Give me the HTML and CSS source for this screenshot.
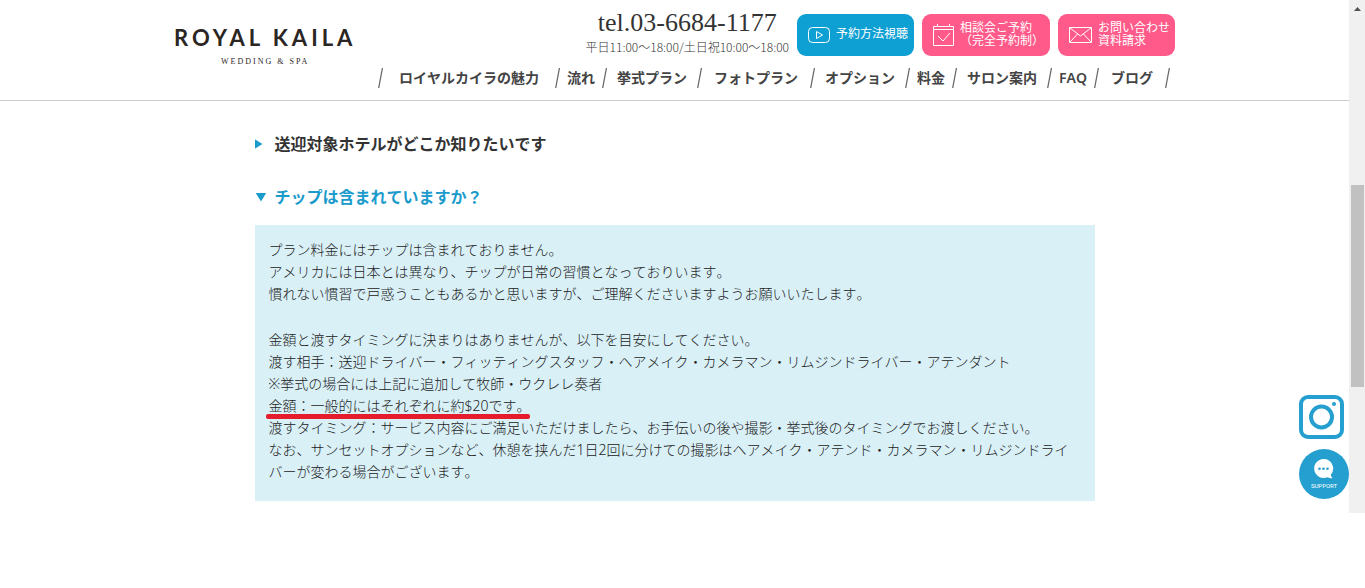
FILE: index.html
```html
<!DOCTYPE html>
<html lang="ja">
<head>
  <meta charset="UTF-8">
  <meta name="viewport" content="width=device-width, initial-scale=1.0">
  <title>よくある質問 | ROYAL KAILA</title>
  <link rel="stylesheet" href="styles.css">
</head>
<body>
  <div class="window">
    <div class="page">
      <header class="header">
        <div class="header-inner">
          <a href="#" class="logo">
            <span class="logo-name">ROYAL KAILA</span>
            <span class="logo-sub">WEDDING &amp; SPA</span>
          </a>
          <div class="header-right">
            <div class="contact">
              <div class="tel">
                <a href="tel:03-6684-1177" class="tel-number">tel.03-6684-1177</a>
                <span class="tel-hours">平日11:00～18:00/土日祝10:00～18:00</span>
              </div>
              <a href="#" class="btn btn-blue">
                <svg width="22" height="16" viewBox="0 0 22 16"><rect x="0.5" y="0.5" width="21" height="15" rx="4"/><path d="M8.500 4.500v7l6-3.500z"/></svg>
                <span>予約方法視聴</span>
              </a>
              <a href="#" class="btn btn-pink btn-wide">
                <svg width="21" height="22" viewBox="0 0 21 22"><path d="M0.500 2.500h20v19h-20zM0.500 5.500h20M4.500 0v3M16.500 0v3M5 12l5 5 7-8"/></svg>
                <span>相談会ご予約<br>（完全予約制）</span>
              </a>
              <a href="#" class="btn btn-pink">
                <svg width="23" height="16" viewBox="0 0 23 16"><path d="M0.500 0.500h22v15h-22zM1 1l10.500 8L22 1M1 15l7.500-8M22 15l-7.500-8"/></svg>
                <span>お問い合わせ<br>資料請求</span>
              </a>
            </div>
            <nav>
              <ul class="nav">
                <li class="wide"><a href="#">ロイヤルカイラの魅力</a></li>
                <li class="narrow"><a href="#">流れ</a></li>
                <li><a href="#">挙式プラン</a></li>
                <li class="middle"><a href="#">フォトプラン</a></li>
                <li><a href="#">オプション</a></li>
                <li class="narrow"><a href="#">料金</a></li>
                <li><a href="#">サロン案内</a></li>
                <li class="narrow"><a href="#">FAQ</a></li>
                <li class="middle"><a href="#">ブログ</a></li>
              </ul>
            </nav>
          </div>
        </div>
      </header>

      <main class="faq">
        <details>
          <summary>送迎対象ホテルがどこか知りたいです</summary>
        </details>
        <details open>
          <summary>チップは含まれていますか？</summary>
          <div class="answer">
            <p>
              プラン料金にはチップは含まれておりません。<br>
              アメリカには日本とは異なり、チップが日常の習慣となっておりいます。<br>
              慣れない慣習で戸惑うこともあるかと思いますが、ご理解くださいますようお願いいたします。
            </p>
            <p>
              金額と渡すタイミングに決まりはありませんが、以下を目安にしてください。<br>
              渡す相手：送迎ドライバー・フィッティングスタッフ・ヘアメイク・カメラマン・リムジンドライバー・アテンダント<br>
              ※挙式の場合には上記に追加して牧師・ウクレレ奏者<br>
              <span class="marked">金額：一般的にはそれぞれに約$20です。</span><br>
              渡すタイミング：サービス内容にご満足いただけましたら、お手伝いの後や撮影・挙式後のタイミングでお渡しください。<br>
              なお、サンセットオプションなど、休憩を挟んだ1日2回に分けての撮影はヘアメイク・アテンド・カメラマン・リムジンドライバーが変わる場合がございます。
            </p>
          </div>
        </details>
      </main>

      <div class="floating">
        <a href="#" class="instagram" aria-label="Instagram">
          <svg width="45" height="44" viewBox="0 0 45 44"><rect x="2" y="2" width="41" height="40" rx="7"/><circle cx="22.500" cy="22" r="10.500"/><circle class="dot" cx="35" cy="9" r="2"/></svg>
        </a>
        <a href="#" class="support">
          <svg width="20" height="20" viewBox="0 0 20 20"><path fill="#fff" d="M9.500 0a9.500 9.500 0 1 0 4 18.200c2 .9 3.500 1.200 5 1-1-1-1.600-2.300-1.600-3.600A9.500 9.500 0 0 0 9.500 0z"/><g fill="#259fcf"><circle cx="5.500" cy="9.800" r="1.300"/><circle cx="9.500" cy="9.800" r="1.300"/><circle cx="13.500" cy="9.800" r="1.300"/></g></svg>
          <span>SUPPORT</span>
        </a>
      </div>
    </div>

    <div class="scrollbar">
      <div class="scroll-arrow"></div>
      <div class="scroll-thumb"></div>
    </div>
  </div>
</body>
</html>
```

FILE: styles.css
```css
* {
  box-sizing: border-box;
}
body {
  margin: 0;
  background: #fff;
  color: #333;
  font-family: "Noto Sans", "Noto Sans CJK JP", sans-serif;
  font-size: 14px;
  font-kerning: none;
}
a {
  color: inherit;
  text-decoration: none;
}
.window {
  display: flex;
}
.page {
  position: relative;
  flex: 1;
  padding-bottom: 12px;
}

/* ---- header ---- */
.header {
  border-bottom: 1px solid #ccc;
}
.header-inner {
  display: flex;
  justify-content: space-between;
  max-width: 1001px;
  margin: 0 auto;
  padding: 8px 0 10px;
}
.logo {
  display: flex;
  flex-direction: column;
  align-items: center;
  padding-top: 16px;
  color: #2b2523;
}
.logo-name {
  font: bold 22px/28px Lato, sans-serif;
  letter-spacing: 4px;
}
.logo-sub {
  padding-top: 4px;
  font: 8px/12px "Liberation Serif", serif;
  letter-spacing: 2px;
}
.header-right {
  display: flex;
  flex-direction: column;
  align-items: flex-end;
}
.contact {
  display: flex;
  gap: 8px;
}
.tel {
  display: flex;
  flex-direction: column;
  align-items: center;
}
.tel-number {
  font: 26px/30px "Liberation Serif", serif;
}
.tel-hours {
  font-family: "Noto Sans CJK JP", sans-serif;
  font-size: 12px;
  font-weight: 300;
  line-height: 18px;
}
.btn {
  display: flex;
  align-items: center;
  gap: 6px;
  width: 117px;
  height: 42px;
  margin-top: 6px;
  padding-left: 11px;
  border-radius: 9px;
  color: #fff;
  font-size: 12px;
  line-height: 13px;
  white-space: nowrap;
}
.btn span {
  padding-bottom: 3px;
}
.btn svg {
  flex: none;
  fill: none;
  stroke: #fff;
}
.btn-blue {
  background: #0e9fd3;
}
.btn-pink {
  background: #ff5a89;
}
.btn-wide {
  width: 128px;
}

/* ---- nav ---- */
.nav {
  display: flex;
  margin: 10px 5px 0 0;
  padding: 0;
  list-style: none;
  color: #444;
  font-weight: 600;
  line-height: 24px;
}
.nav li {
  display: flex;
  align-items: center;
}
.nav a {
  padding: 0 10px;
}
.nav .narrow a {
  padding: 0 7px;
}
.nav .middle a {
  padding: 0 12px;
}
.nav .wide a {
  padding: 0 16px;
}
.nav li::after,
.nav li:first-child::before {
  content: "";
  width: 5px;
  height: 20px;
  background: #666;
  clip-path: polygon(75% 0, 100% 0, 25% 100%, 0 100%);
}

/* ---- faq ---- */
.faq {
  max-width: 840px;
  margin: 0 auto;
  padding-top: 29px;
}
summary {
  display: flex;
  align-items: center;
  gap: 12px;
  margin-bottom: 25px;
  font-size: 16px;
  font-weight: 700;
  line-height: 28px;
  cursor: pointer;
}
summary::before {
  content: "";
  width: 8px;
  height: 10px;
  background: #1a9bcb;
  clip-path: polygon(0 0, 100% 50%, 0 100%);
}
details[open] summary {
  gap: 8px;
  margin-bottom: 14px;
  color: #1a9bcb;
}
details[open] summary::before {
  width: 12px;
  height: 9px;
  clip-path: polygon(8% 0, 100% 0, 54% 100%);
}
.answer {
  padding: 14px 14px 18px;
  background: #d9f0f7;
  color: #222;
}
.answer p {
  margin: 0;
  font-weight: 300;
  line-height: 22px;
}
.answer p + p {
  margin-top: 24px;
}
.marked {
  position: relative;
}
.marked::after {
  content: "";
  position: absolute;
  left: -3px;
  right: 0;
  bottom: -4px;
  height: 5px;
  border-radius: 2px;
  background: #e51c2c;
}

/* ---- floating buttons ---- */
.floating {
  position: absolute;
  right: 0;
  bottom: 14px;
  display: flex;
  flex-direction: column;
  gap: 10px;
}
.instagram svg {
  display: block;
  fill: none;
  stroke: #259fcf;
  stroke-width: 4;
}
.instagram .dot {
  fill: #259fcf;
  stroke: none;
}
.support {
  display: flex;
  flex-direction: column;
  align-items: center;
  gap: 2px;
  width: 50px;
  height: 50px;
  padding-top: 10px;
  border-radius: 50%;
  background: #259fcf;
  color: #fff;
  font: 6px/10px Roboto, sans-serif;
}

/* ---- scrollbar ---- */
.scrollbar {
  width: 16px;
  padding: 7px 1px 0 2px;
  background: #f0f0f0;
}
.scroll-arrow {
  width: 7px;
  height: 4px;
  margin: 0 auto 174px;
  background: #505050;
  clip-path: polygon(50% 0, 100% 100%, 0 100%);
}
.scroll-thumb {
  height: 202px;
  background: #c1c1c1;
}
```
